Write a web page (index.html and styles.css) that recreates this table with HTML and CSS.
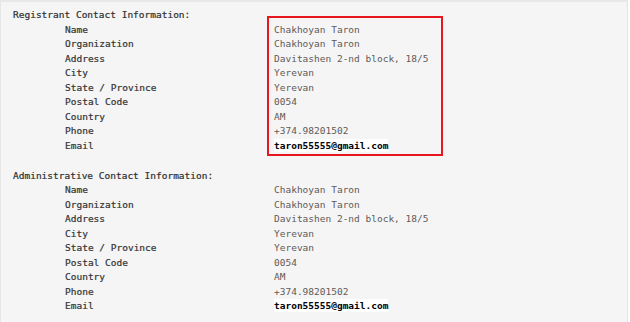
FILE: index.html
```html
<!DOCTYPE html>
<html>
<head>
<meta charset="utf-8">
<link rel="stylesheet" href="styles.css">
</head>
<body>
<div class="panel">
  <section class="block">
    <div class="title">Registrant Contact Information:</div>
    <div class="rows">
      <div class="label">Name</div><div class="value">Chakhoyan Taron</div>
      <div class="label">Organization</div><div class="value">Chakhoyan Taron</div>
      <div class="label">Address</div><div class="value">Davitashen 2-nd block, 18/5</div>
      <div class="label">City</div><div class="value">Yerevan</div>
      <div class="label">State / Province</div><div class="value">Yerevan</div>
      <div class="label">Postal Code</div><div class="value">0054</div>
      <div class="label">Country</div><div class="value">AM</div>
      <div class="label">Phone</div><div class="value">+374.98201502</div>
      <div class="label">Email</div><div class="value"><span class="email">taron55555@gmail.com</span></div>
    </div>
  </section>
  <section class="block block-next">
    <div class="title">Administrative Contact Information:</div>
    <div class="rows">
      <div class="label">Name</div><div class="value">Chakhoyan Taron</div>
      <div class="label">Organization</div><div class="value">Chakhoyan Taron</div>
      <div class="label">Address</div><div class="value">Davitashen 2-nd block, 18/5</div>
      <div class="label">City</div><div class="value">Yerevan</div>
      <div class="label">State / Province</div><div class="value">Yerevan</div>
      <div class="label">Postal Code</div><div class="value">0054</div>
      <div class="label">Country</div><div class="value">AM</div>
      <div class="label">Phone</div><div class="value">+374.98201502</div>
      <div class="label">Email</div><div class="value"><span class="email">taron55555@gmail.com</span></div>
    </div>
  </section>
  <div class="highlight"></div>
</div>
</body>
</html>
```
FILE: styles.css
```css
html, body {
  margin: 0;
  padding: 0;
  background: #ffffff;
}
body {
  width: 630px;
  height: 322px;
  overflow: hidden;
}
.panel {
  position: relative;
  box-sizing: border-box;
  width: 628px;
  height: 322px;
  background: #f5f5f5;
  border-top: 2px solid #e7e9e9;
  border-left: 1px solid #e6e6e6;
  border-right: 1px solid #e3e3e3;
  padding: 6px 0 0 12px;
  font-family: "DejaVu Sans Mono", "Liberation Mono", monospace;
  font-size: 9.5px;
  line-height: 14.5px;
  color: #333333;
}
.title {
  color: #2f2f2f;
  -webkit-text-stroke: 0.2px #2f2f2f;
}
.rows {
  display: grid;
  grid-template-columns: 209px auto;
  padding-left: 52px;
}
.label {
  color: #333333;
  -webkit-text-stroke: 0.2px #333333;
}
.value {
  color: #5f5a55;
}
.email {
  background: #ffffff;
  color: #000000;
  font-weight: bold;
  padding: 1px 0;
}
.block-next {
  margin-top: 15.5px;
}
.highlight {
  position: absolute;
  left: 266px;
  top: 14px;
  width: 172px;
  height: 136px;
  border: 2px solid #e8161f;
}
```
